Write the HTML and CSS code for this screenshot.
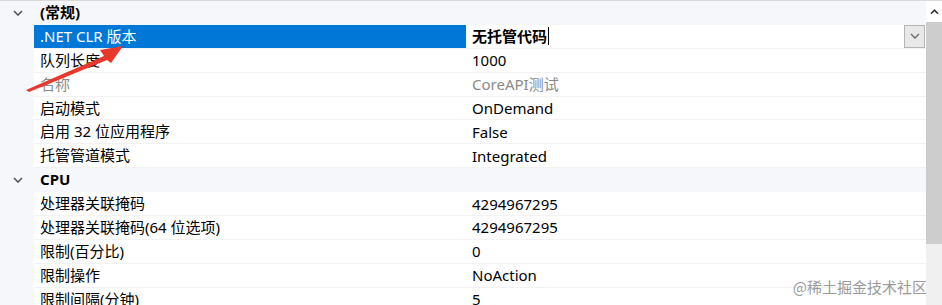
FILE: index.html
```html
<!DOCTYPE html>
<html lang="zh-CN">
<head>
  <meta charset="UTF-8" />
  <title>应用程序池高级设置</title>
  <link rel="stylesheet" href="styles.css">
</head>
<body>
  <div class="panel">
    <div class="grid">
      <div class="row cat">
        <div class="gutter"><svg class="chev" viewBox="0 0 10 6"><path d="M1 1 L5 5 L9 1" /></svg></div>
        <div class="name">(常规)</div>
        <div class="value"></div>
      </div>
      <div class="row sel">
        <div class="gutter"></div>
        <div class="name">.NET CLR 版本</div>
        <div class="value edit"><b>无托管代码</b><span class="caret"></span>
          <span class="drop"><svg viewBox="0 0 10 6"><path d="M1 1 L5 5 L9 1" /></svg></span>
        </div>
      </div>
      <div class="row"><div class="gutter"></div><div class="name">队列长度</div><div class="value">1000</div></div>
      <div class="row off"><div class="gutter"></div><div class="name">名称</div><div class="value">CoreAPI测试</div></div>
      <div class="row"><div class="gutter"></div><div class="name">启动模式</div><div class="value">OnDemand</div></div>
      <div class="row"><div class="gutter"></div><div class="name">启用 32 位应用程序</div><div class="value">False</div></div>
      <div class="row"><div class="gutter"></div><div class="name">托管管道模式</div><div class="value">Integrated</div></div>
      <div class="row cat">
        <div class="gutter"><svg class="chev" viewBox="0 0 10 6"><path d="M1 1 L5 5 L9 1" /></svg></div>
        <div class="name">CPU</div>
        <div class="value"></div>
      </div>
      <div class="row"><div class="gutter"></div><div class="name">处理器关联掩码</div><div class="value">4294967295</div></div>
      <div class="row"><div class="gutter"></div><div class="name">处理器关联掩码(64 位选项)</div><div class="value">4294967295</div></div>
      <div class="row"><div class="gutter"></div><div class="name">限制(百分比)</div><div class="value">0</div></div>
      <div class="row"><div class="gutter"></div><div class="name">限制操作</div><div class="value">NoAction</div></div>
      <div class="row"><div class="gutter"></div><div class="name">限制间隔(分钟)</div><div class="value">5</div></div>
    </div>
    <div class="scroll">
      <div class="up"><svg viewBox="0 0 10 6"><path d="M1 5 L5 1 L9 5" /></svg></div>
      <div class="thumb"></div>
    </div>
  </div>

  <svg class="arrow" width="140" height="100" viewBox="0 0 140 100">
    <polygon points="26,90 104,56 100,50 123,46 111,63 107,60 29,92" />
  </svg>

  <div class="mark">@稀土掘金技术社区</div>
</body>
</html>
```

FILE: styles.css
```css
body {
  margin: 0;
  font-family: "Noto Sans", "Noto Sans CJK SC", sans-serif;
  font-size: 15px;
  color: #000;
  background: #fff;
  width: 942px;
  height: 305px;
  overflow: hidden;
}

.panel {
  display: flex;
  border-top: 1px solid #d9d9d9;
  height: 304px;
}

.grid {
  flex: 1;
}

.row {
  display: grid;
  grid-template-columns: 34px 432px 1fr;
  height: 23.9px;
  line-height: 22px;
}

.gutter {
  background: #f5f7fb;
  display: flex;
  align-items: center;
  justify-content: center;
  padding-left: 2px;
}

.chev {
  width: 10px;
  height: 6px;
  fill: none;
  stroke: #555;
  stroke-width: 1.6;
}

.name {
  padding-left: 6px;
  border-bottom: 1px solid #f2f2f2;
  white-space: nowrap;
}

.value {
  padding-left: 6px;
  border-bottom: 1px solid #f2f2f2;
  display: flex;
  align-items: center;
}

.row.cat .name,
.row.cat .value {
  background: #f5f7fb;
  border-bottom-color: #f5f7fb;
  font-weight: bold;
}

.row.sel .name {
  background: #0078d7;
  color: #fff;
}

.row.off {
  color: #8a8a8a;
}

.caret {
  width: 1px;
  height: 18px;
  background: #000;
  margin-left: 1px;
}

.drop {
  margin-left: auto;
  margin-right: 1px;
  width: 19px;
  height: 21px;
  border: 1px solid #b4b4b4;
  background: #e8e8e8;
  display: flex;
  align-items: center;
  justify-content: center;
}

.drop svg {
  width: 10px;
  height: 6px;
  fill: none;
  stroke: #666;
  stroke-width: 1.3;
}

.scroll {
  width: 16px;
  background: #f0f0f0;
  display: flex;
  flex-direction: column;
}

.up {
  height: 21px;
  background: #fff;
  display: flex;
  align-items: center;
  justify-content: center;
}

.up svg {
  width: 9px;
  height: 6px;
  fill: none;
  stroke: #333;
  stroke-width: 1.8;
}

.thumb {
  height: 222px;
  background: #cdcdcd;
}

.arrow {
  position: absolute;
  left: 0;
  top: 0;
}

.arrow polygon {
  fill: #e8382b;
}

.mark {
  position: absolute;
  right: 15px;
  bottom: 8px;
  color: #9a9a9a;
  font-size: 15px;
  font-family: "Noto Sans CJK SC", sans-serif;
}
```
